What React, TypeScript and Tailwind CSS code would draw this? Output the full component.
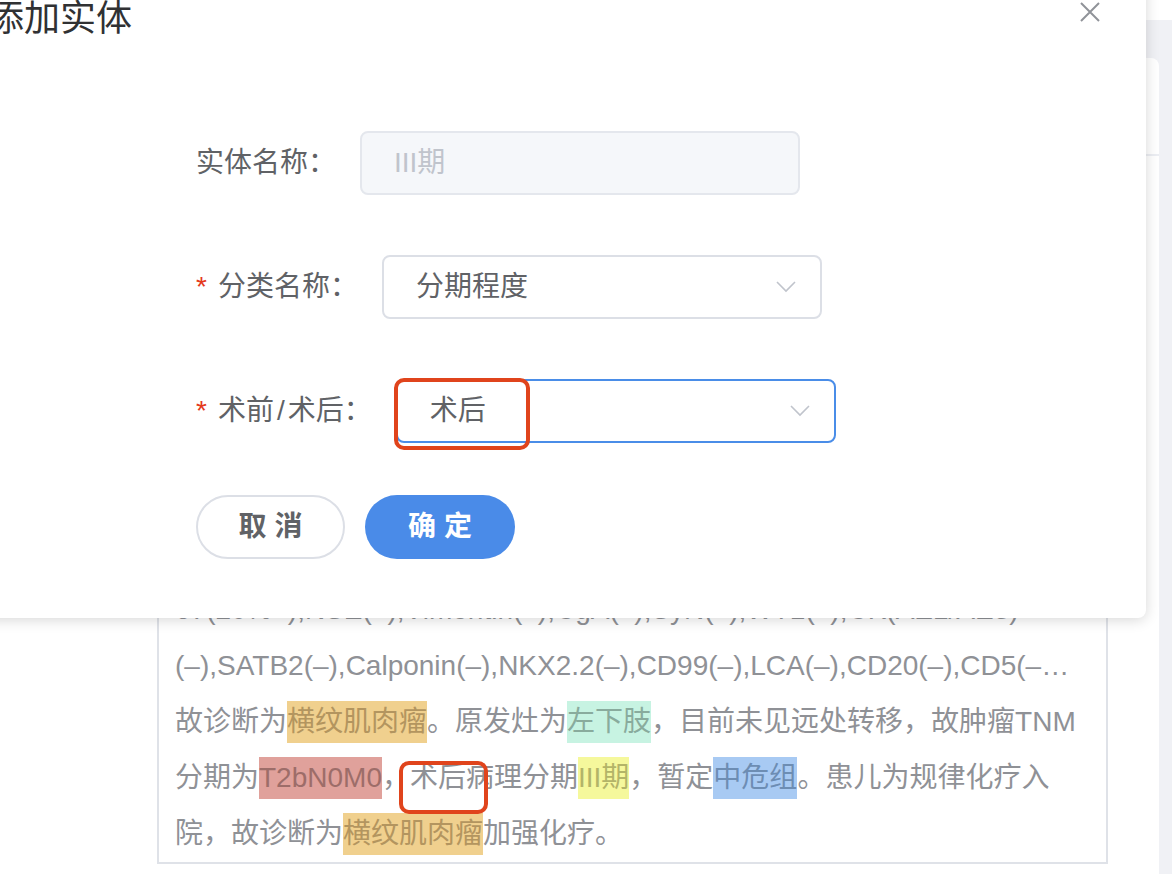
import React from 'react';

function Chevron() {
  return (
    <svg width="20" height="12" viewBox="0 0 20 12" fill="none">
      <polyline points="1,1 10,10 19,1" stroke="#c0c4cc" strokeWidth="1.6" />
    </svg>
  );
}

function CloseIcon() {
  return (
    <svg width="20" height="20" viewBox="0 0 20 20" fill="none">
      <path d="M1 1L19 19M19 1L1 19" stroke="#909399" strokeWidth="2" />
    </svg>
  );
}

function Required() {
  return <span className="mr-[11px] text-[#e4391b]">*</span>;
}

function Modal() {
  return (
    <div className="absolute left-[-48px] top-[-36px] h-[654px] w-[1194px] rounded-[8px] bg-white shadow-[0_2px_14px_rgba(0,0,0,0.16)]">
      <div className="flex items-start justify-between pl-[36px] pr-[46px] pt-[37px]">
        <div className="text-[36px] leading-[36px] text-[#303133]">添加实体</div>
        <button className="mt-[1px]">
          <CloseIcon />
        </button>
      </div>

      <div className="mt-[94px] pl-[244px] text-[28px] text-[#606266]">
        <div className="mb-[60px] flex items-center">
          <label className="pr-[24px] leading-[64px]">实体名称：</label>
          <div className="flex h-[64px] w-[440px] items-center rounded-[8px] border-2 border-[#e4e7ed] bg-[#f5f7fa] pl-[32px] text-[#c0c4cc]">
            III期
          </div>
        </div>

        <div className="mb-[60px] flex items-center">
          <label className="pr-[24px] leading-[64px]">
            <Required />
            分类名称：
          </label>
          <div className="flex h-[64px] w-[440px] items-center justify-between rounded-[8px] border-2 border-[#dcdfe6] bg-white pl-[32px] pr-[24px]">
            <span>分期程度</span>
            <Chevron />
          </div>
        </div>

        <div className="mb-[52px] flex items-center">
          <label className="pr-[24px] leading-[64px]">
            <Required />
            术前<span className="px-[3px]">/</span>术后：
          </label>
          <div className="relative flex h-[64px] w-[440px] items-center justify-between rounded-[8px] border-2 border-[#4a8de8] bg-white pl-[32px] pr-[24px]">
            <span>术后</span>
            <Chevron />
            <div className="absolute left-[-4px] top-[-3px] h-[72px] w-[136px] rounded-[10px] border-4 border-[#e0441c]" />
          </div>
        </div>

        <div className="flex gap-[20px]">
          <button className="h-[64px] w-[149px] rounded-full border-2 border-[#dcdfe6] bg-white font-bold text-[#606266]">
            取 消
          </button>
          <button className="h-[64px] w-[150px] rounded-full bg-[#4a8be8] font-bold text-white">
            确 定
          </button>
        </div>
      </div>
    </div>
  );
}

function TextBox() {
  return (
    <div className="border-2 border-[#dfe2e8] px-[16px] pt-[10px] text-[28px] leading-[56px] text-[#8f9196]">
      <div className="whitespace-nowrap">病理诊断：（左下肢）横纹肌肉瘤（胚胎型），免疫组化结果：Desmin(+),</div>
      <div className="whitespace-nowrap">MyoD1(+),Myogenin(+),S-100(–),CD56(+),Syn(–),CD34(–),Ki-</div>
      <div className="whitespace-nowrap">67(20%+),NSE(–),Vimentin(–),CgA(–),SyN(–),WT1(–),CK(AE1/AE3)</div>
      <div className="whitespace-nowrap">(–),SATB2(–),Calponin(–),NKX2.2(–),CD99(–),LCA(–),CD20(–),CD5(–…</div>
      <div className="whitespace-nowrap">
        故诊断为<span className="inline-block bg-[#f0d08e] leading-[42px] text-[#b3955f]">横纹肌肉瘤</span>。原发灶为
        <span className="inline-block bg-[#c7f3e2] leading-[42px] text-[#89ab9d]">左下肢</span>，目前未见远处转移，故肿瘤TNM
      </div>
      <div className="whitespace-nowrap">
        分期为<span className="inline-block bg-[#e0a19b] leading-[42px] text-[#9d6d69]">T2bN0M0</span>，
        <span className="relative">
          术后
          <span className="absolute left-[-11px] top-[-1px] h-[53px] w-[89px] rounded-[10px] border-4 border-[#e0441c]" />
        </span>
        病理分期<span className="inline-block bg-[#f5f89c] leading-[42px] text-[#b3b468]">III期</span>，暂定
        <span className="inline-block bg-[#a8caf3] leading-[42px] text-[#6d8db3]">中危组</span>。患儿为规律化疗入
      </div>
      <div className="whitespace-nowrap">
        院，故诊断为<span className="inline-block bg-[#f0d08e] leading-[42px] text-[#b3955f]">横纹肌肉瘤</span>加强化疗。
      </div>
    </div>
  );
}

export default function App() {
  return (
    <div className="relative h-[874px] w-[1172px] overflow-hidden bg-white font-['Liberation_Sans','Noto_Sans_CJK_SC',sans-serif]">
      <div className="flex h-full flex-col">
        <div className="h-[20px] shrink-0 bg-white" />
        <div className="flex flex-1 flex-col bg-[#f0f1f5] pr-[13px] pt-[38px]">
          <div className="flex flex-1 flex-col overflow-hidden rounded-tr-[8px] bg-white">
            <div className="h-[98px] shrink-0 border-b-2 border-[#eceef3]" />
            <div className="flex flex-1 flex-col justify-end pb-[10px] pl-[157px] pr-[51px]">
              <TextBox />
            </div>
          </div>
        </div>
      </div>
      <Modal />
    </div>
  );
}
